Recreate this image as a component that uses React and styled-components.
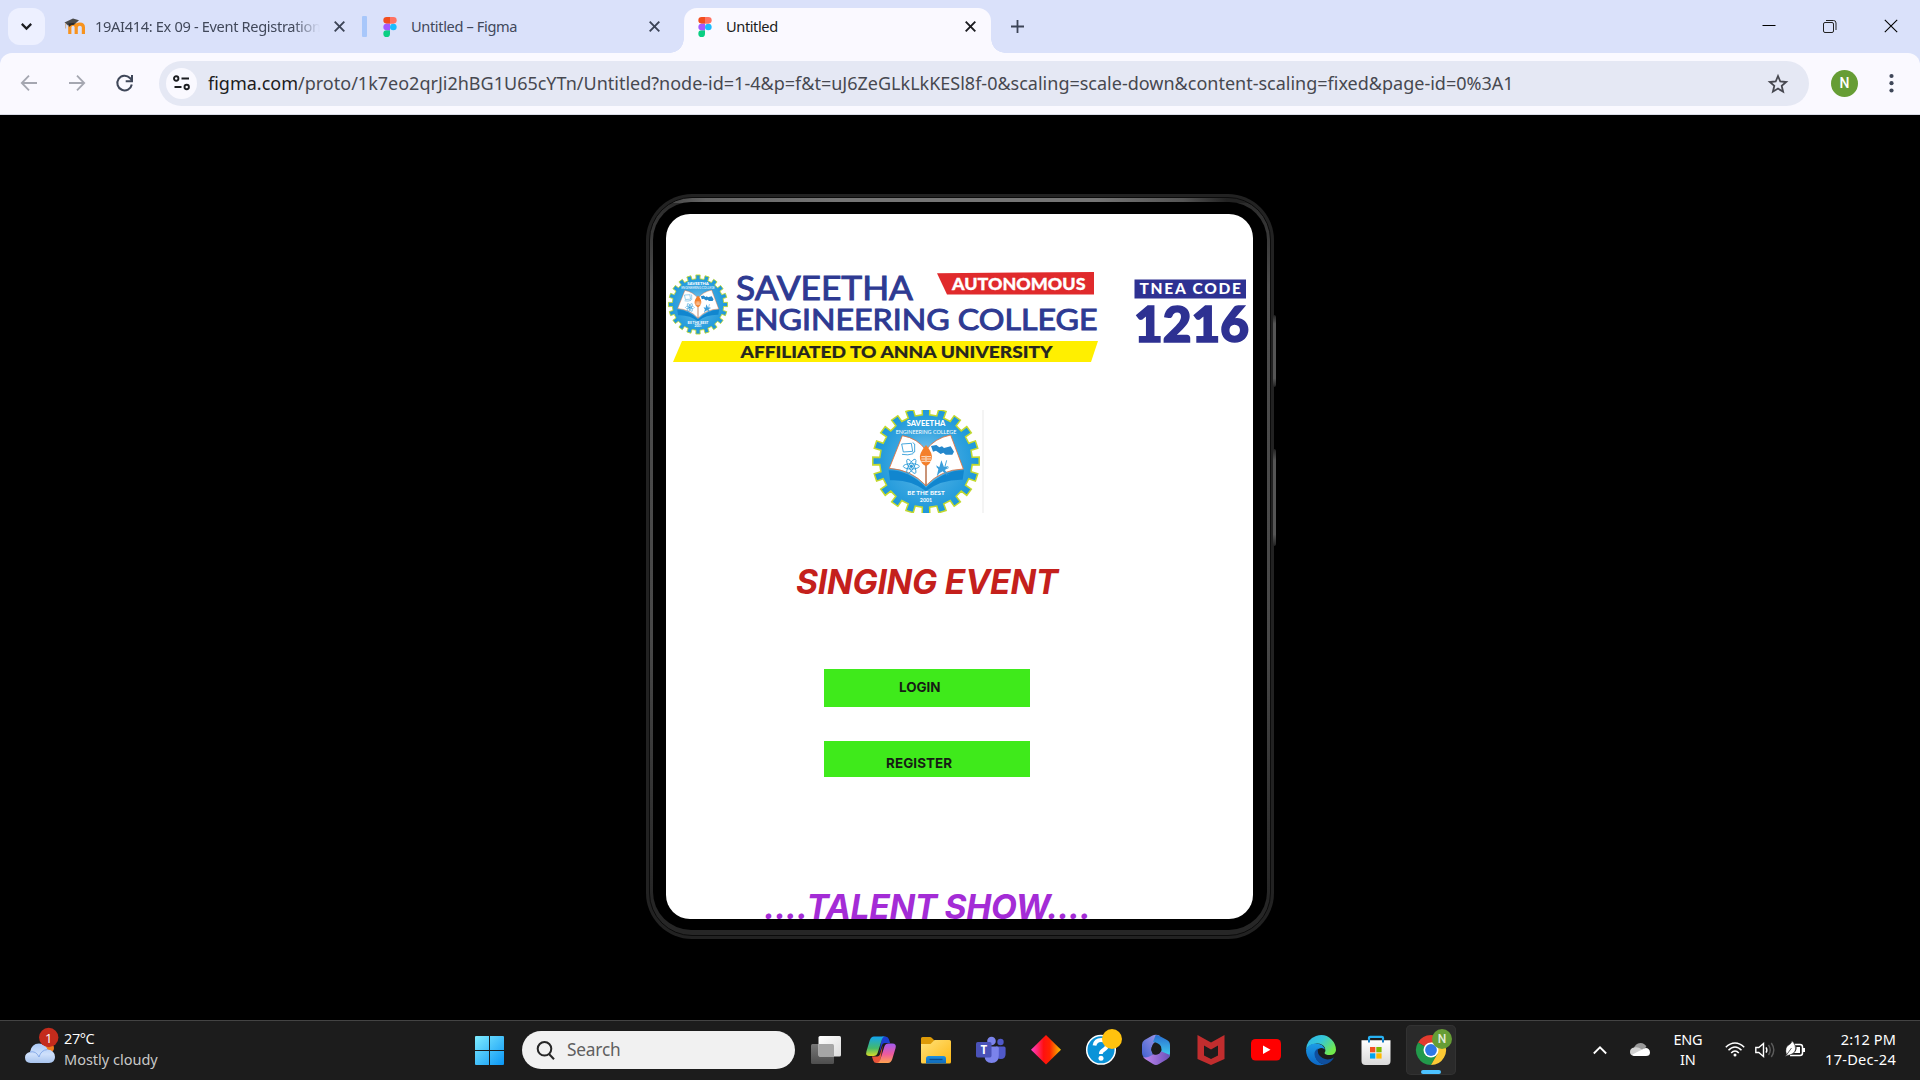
import React from "react";
import styled, { createGlobalStyle } from "styled-components";

const UI = `"Noto Sans", "Open Sans", sans-serif`;

const GlobalStyle = createGlobalStyle`
  * { box-sizing: border-box; }
  html, body { margin: 0; padding: 0; background: #000; overflow: hidden; }
  svg { display: block; overflow: visible; flex: none; }
`;

const Desktop = styled.div`
  width: 1920px;
  height: 1080px;
  display: flex;
  flex-direction: column;
  background: #000;
  font-family: ${UI};
`;

const Txt = styled.span`
  flex: none;
  font-size: ${(p) => p.$size}px;
  line-height: ${(p) => p.$line || 20}px;
  letter-spacing: ${(p) => p.$track || 0}px;
  color: ${(p) => p.$color};
  white-space: nowrap;
`;

/* ---------- browser chrome ---------- */

const TabStrip = styled.header`
  height: 53px;
  display: flex;
  background: #dae1fa;
  padding-left: 8px;
`;

const TabSearch = styled.button`
  width: 37px;
  height: 37px;
  margin: 8px 19px 0 0;
  border: 0;
  padding: 0;
  border-radius: 12px;
  background: #edf0ff;
  display: grid;
  place-items: center;
`;

const Tab = styled.div`
  width: ${(p) => p.$width}px;
  height: 37px;
  margin-top: 8px;
  display: flex;
  align-items: center;
  padding: 0 ${(p) => p.$right}px 0 ${(p) => p.$left}px;
`;

const ActiveTab = styled(Tab)`
  position: relative;
  height: 45px;
  padding-bottom: 8px;
  border-radius: 13px 13px 0 0;
  background: #faf9ff;
  &::before, &::after {
    content: "";
    position: absolute;
    bottom: 0;
    width: 14px;
    height: 14px;
  }
  &::before { left: -14px; background: radial-gradient(circle at 0 0, transparent 13.5px, #faf9ff 14px); }
  &::after { right: -14px; background: radial-gradient(circle at 100% 0, transparent 13.5px, #faf9ff 14px); }
`;

const TabTitle = styled.div`
  flex: 1;
  min-width: 0;
  margin-left: ${(p) => p.$gap}px;
  margin-right: 14px;
  padding-bottom: 2px;
  overflow: hidden;
  display: flex;
  ${(p) => p.$fade && `mask-image: linear-gradient(90deg, #000 88%, transparent 100%);`}
`;

const TabDivider = styled.div`
  width: 5px;
  height: 21px;
  margin-top: 16px;
  border-radius: 1px;
  background: #a8c7fa;
`;

const NewTab = styled.div`
  margin: 20px 0 0 20px;
`;

const WindowButtons = styled.div`
  margin-left: auto;
  display: flex;
  gap: 47px;
  padding: 19px 22px 0 0;
`;

const ToolbarBack = styled.div`
  background: #dae1fa;
  flex: none;
`;

const Toolbar = styled.nav`
  height: 62px;
  display: flex;
  align-items: center;
  padding: 0 22px 1px 18px;
  border-radius: 12px 12px 0 0;
  background: #faf9ff;
  border-bottom: 1px solid #d9dbe6;
`;

const NavIcons = styled.div`
  width: 141px;
  display: flex;
  gap: 26px;
`;

const Omnibox = styled.div`
  width: 1650px;
  height: 45px;
  border-radius: 23px;
  background: #e5e8f4;
  display: flex;
  align-items: center;
  padding: 0 21px 0 7px;
`;

const SiteInfo = styled.div`
  width: 31px;
  height: 31px;
  border-radius: 50%;
  background: #faf9ff;
  display: grid;
  place-items: center;
  margin-right: 11px;
`;

const Url = styled(Txt)`
  flex: 1;
  b { font-weight: 400; color: #1b1c20; }
`;

const Avatar = styled.div`
  width: 27px;
  height: 27px;
  margin: 0 31px 0 22px;
  border-radius: 50%;
  background: #669d35;
  color: #fff;
  font: 500 14px/27px Roboto, sans-serif;
  text-align: center;
`;

/* ---------- prototype stage ---------- */

const Stage = styled.main`
  flex: 1;
  display: flex;
  justify-content: center;
  align-items: flex-start;
  padding-top: 79px;
  background: #000;
`;

const Device = styled.div`
  position: relative;
  width: 628px;
  height: 745px;
  padding: 3px;
  border-radius: 46px;
  background: #222;
`;

const Band = styled.div`
  height: 100%;
  border-radius: 43px;
  border: 1px solid #0b0b0b;
  background: linear-gradient(90deg, #333 0, #666 9%, #757575 30%, #757575 72%, #555 86%, #222 93%) top / 100% 5px no-repeat,
    linear-gradient(180deg, #2a2a2a 0, #4c4c4c 12%, #484848 60%, #262626 95%);
  padding: 4px 3px 5px;
`;

const Bezel = styled.div`
  height: 100%;
  padding: 12px 13px 11px 13px;
  border-radius: 38px;
  background: #000;
`;

const Screen = styled.section`
  width: 587px;
  height: 705px;
  border-radius: 24px;
  overflow: hidden;
  background: #fff;
  display: flex;
  flex-direction: column;
  align-items: flex-start;
  & > * { flex: none; }
`;

const SideButton = styled.div`
  position: absolute;
  left: 627px;
  top: ${(p) => p.$top}px;
  width: 3px;
  height: ${(p) => p.$height}px;
  border-radius: 0 2px 2px 0;
  background: linear-gradient(180deg, #222, #555 12%, #555 88%, #222);
`;

const BannerBox = styled.div`
  margin-top: 56px;
  height: 94px;
`;

const CrestBox = styled.div`
  margin: 46px 0 0 206px;
  height: 103px;
`;

const Heading = styled.h1`
  margin: ${(p) => p.$top}px 0 0 ${(p) => p.$left}px;
  font: italic 700 33.6px/40px Inter, sans-serif;
  letter-spacing: ${(p) => p.$track}px;
  color: ${(p) => p.$color};
  white-space: nowrap;
`;

const ActionButton = styled.button`
  width: 206px;
  height: ${(p) => p.$height}px;
  margin: ${(p) => p.$top}px 0 0 158px;
  padding: ${(p) => p.$drop}px 0 0 ${(p) => p.$inset}px;
  border: 0;
  background: #3fea1b;
  color: #161c14;
  display: flex;
  font: 700 13.4px/16px Inter, sans-serif;
  letter-spacing: ${(p) => p.$track}px;
`;

/* ---------- taskbar ---------- */

const Taskbar = styled.footer`
  height: 60px;
  display: flex;
  background: #1c1c1c;
  border-top: 1px solid #434343;
`;

const Weather = styled.div`
  width: 475px;
  display: flex;
  padding: 8px 0 0 24px;
`;

const Stack = styled.div`
  display: flex;
  flex-direction: column;
  align-items: ${(p) => p.$align || "flex-start"};
  margin-left: ${(p) => p.$gap || 0}px;
  padding-top: ${(p) => p.$drop || 0}px;
`;

const StartIcon = styled.div`
  width: 47px;
  padding-top: 15px;
`;

const SearchBox = styled.div`
  width: 273px;
  height: 38px;
  margin-top: 10px;
  border-radius: 19px;
  background: #f1f1f1;
  display: flex;
  align-items: center;
  padding-left: 14px;
  gap: 12px;
`;

const Apps = styled.div`
  display: grid;
  grid-template-columns: repeat(12, 55px);
  align-content: start;
  margin: 4px 0 0 3.5px;
`;

const AppCell = styled.div`
  height: 50px;
  width: 50px;
  justify-self: center;
  display: grid;
  place-items: center;
  border-radius: 5px;
  position: relative;
  ${(p) => p.$active && `
    background: #2a2a2a;
    box-shadow: inset 0 0 0 1px #323232;
    &::after {
      content: "";
      position: absolute;
      left: 15px;
      bottom: 1px;
      width: 20px;
      height: 4px;
      border-radius: 2px;
      background: #4cc2ff;
    }
  `}
`;

const Tray = styled.div`
  margin-left: auto;
  display: flex;
  padding-right: 24px;
`;

const TrayIcon = styled.div`
  width: ${(p) => p.$width}px;
  margin-left: ${(p) => p.$gap || 0}px;
  padding-top: 18px;
`;

/* ---------- drawings ---------- */

const Cross = ({ color, size = 11, w = 1.9 }) => (
  <svg width={size} height={size} viewBox="0 0 11 11" stroke={color} strokeWidth={w}>
    <path d="M.7.7l9.6 9.6M10.3.7L.7 10.3" />
  </svg>
);

const FigmaIcon = () => (
  <svg width="14" height="20" viewBox="0 0 38 57">
    <path fill="#1abcfe" d="M19 28.5a9.5 9.5 0 1 1 19 0 9.5 9.5 0 0 1-19 0z" />
    <path fill="#0acf83" d="M0 47.5A9.5 9.5 0 0 1 9.5 38H19v9.5a9.5 9.5 0 1 1-19 0z" />
    <path fill="#ff7262" d="M19 0v19h9.5a9.5 9.5 0 1 0 0-19H19z" />
    <path fill="#f24e1e" d="M0 9.5A9.5 9.5 0 0 0 9.5 19H19V0H9.5A9.5 9.5 0 0 0 0 9.5z" />
    <path fill="#a259ff" d="M0 28.5A9.5 9.5 0 0 0 9.5 38H19V19H9.5A9.5 9.5 0 0 0 0 28.5z" />
  </svg>
);

const MoodleIcon = () => (
  <svg width="22" height="17" viewBox="0 0 22 17">
    <path d="M5.8 16V9.3q0-3.2 3.3-3.2 3.1 0 3.1 3.2V16M12.2 9.3q0-3.2 3.6-3.2 3.6 0 3.6 3.2V16" fill="none" stroke="#f7931e" strokeWidth="3.2" />
    <path d="M.5 4.6L9 .6l6 1.6-5 4.6-2-.6-4 1.2z" fill="#4a4a4a" />
    <path d="M1.6 5v5.5" stroke="#c9a98a" strokeWidth=".9" />
    <path d="M4.5 5.5l.4 3.4q2.4-2.4 5.2-2.2l.3-2z" fill="#2b2b2b" />
  </svg>
);

const gearPath = (cx, cy, outer, inner, teeth) => {
  const pts = [];
  const step = (Math.PI * 2) / teeth;
  for (let i = 0; i < teeth; i++) {
    const a = i * step;
    [[-0.25, inner], [-0.23, outer], [0.23, outer], [0.25, inner]].forEach(([k, r]) => {
      pts.push(`${(cx + r * Math.cos(a + k * step)).toFixed(1)} ${(cy + r * Math.sin(a + k * step)).toFixed(1)}`);
    });
  }
  return `M${pts.join("L")}Z`;
};

const Crest = () => (
  <g>
    <path d={gearPath(228, 198, 160, 139, 20)} fill="url(#crestFill)" stroke="#c2d82e" strokeWidth="4.5" />
    <path d="M116 226q62 0 112 52q52-52 114-52l-4 28q-62-2-110 34q-48-36-108-32z" fill="#1186cf" />
    <path d="M157 122q46 8 71 44q24-36 74-46l38 102q-68 2-112 50q-44-48-110-52z" fill="#fff" stroke="#e8703a" strokeWidth="2.5" />
    <path d="M228 200v72" stroke="#b9714a" strokeWidth="4.5" />
    <path d="M228 150q22 26 17 42q-4 16-17 21q-14-5-18-21q-4-16 18-42z" fill="#f47f2a" />
    <path d="M214 185h29M214 192h29M214 199h29" stroke="#fff" strokeWidth="2.4" />
    <path d="M228 182v20" stroke="#f7c8a0" strokeWidth="5" />
    <g fill="none" stroke="#2b9ad8" strokeWidth="2.6">
      <path d="M155 147l5 24 28-2-4-24zM188 143l6 4v24l-6 2M156 178q18 4 34-2" />
      <ellipse cx="184" cy="214" rx="24" ry="8" />
      <ellipse cx="184" cy="214" rx="24" ry="8" transform="rotate(60 184 214)" />
      <ellipse cx="184" cy="214" rx="24" ry="8" transform="rotate(120 184 214)" />
      <path d="M260 216l12 8M290 196l-6 22M296 218l-14 6 14 16" />
    </g>
    <path d="M243 153l16-3 9 7 8-3 6 5 20-5 10 16-5 9-20 0-7-6-8 4-14-10-9 3z" fill="#2488cc" />
    <path d="M274 196l8 20 14-3-12 12 8 18-14-14-10 6-8 10 5-22-7-12 10 6z" fill="#3a9edb" />
    <circle cx="184" cy="214" r="5" fill="#2b9ad8" />
    <g fill="#fff" fontFamily='Lato, sans-serif' fontWeight="700" textAnchor="middle">
      <text x="228" y="94" fontSize="20.5" fontWeight="900" textLength="116" lengthAdjust="spacingAndGlyphs">SAVEETHA</text>
      <text x="228" y="117" fontSize="17" fontWeight="400" textLength="182" lengthAdjust="spacingAndGlyphs">ENGINEERING COLLEGE</text>
      <text x="228" y="301" fontSize="18.5" textLength="112" lengthAdjust="spacingAndGlyphs">BE THE BEST</text>
      <text x="228" y="320" fontSize="18" textLength="37" lengthAdjust="spacingAndGlyphs">2001</text>
    </g>
  </g>
);

const Banner = () => (
  <svg width="587" height="94" viewBox="666 270 587 94" fontFamily="Lato, sans-serif">
    <defs>
      <radialGradient id="crestFill">
        <stop offset="0" stopColor="#8ccdf0" />
        <stop offset=".55" stopColor="#3aa6e0" />
        <stop offset="1" stopColor="#1c97da" />
      </radialGradient>
    </defs>
    <svg x="668" y="274.5" width="60" height="60" viewBox="66 36 324 324"><Crest /></svg>
    <g fill="#2e3a92" stroke="#2e3a92" strokeWidth="1">
      <text x="736" y="300.4" fontSize="33.5" textLength="177" lengthAdjust="spacingAndGlyphs">SAVEETHA</text>
      <text x="735.5" y="330" fontSize="29" textLength="362" lengthAdjust="spacingAndGlyphs">ENGINEERING COLLEGE</text>
    </g>
    <path d="M937 273.2L1094 272v22.6H947z" fill="#e02a2c" />
    <text x="952" y="289.6" fontSize="17" fontWeight="900" fill="#fff" stroke="#fff" strokeWidth=".3" textLength="133.5" lengthAdjust="spacingAndGlyphs">AUTONOMOUS</text>
    <path d="M682 341h416l-7 21H673z" fill="#ffef00" />
    <text x="740.5" y="357.6" fontSize="17" fontWeight="900" fill="#26261f" stroke="#26261f" strokeWidth=".2" textLength="312" lengthAdjust="spacingAndGlyphs">AFFILIATED TO ANNA UNIVERSITY</text>
    <path d="M1134.5 279.5h111.5v19h-111.5z" fill="#2e3192" />
    <text x="1139.5" y="294" fontSize="15.5" fontWeight="900" fill="#fff" textLength="101.5">TNEA CODE</text>
    <text x="1134" y="341.8" fontSize="50" fontWeight="900" fill="#2e3192" stroke="#2e3192" strokeWidth="1.7" textLength="115" lengthAdjust="spacingAndGlyphs">1216</text>
  </svg>
);

const CrestFrame = styled.svg`
  && { overflow: hidden; }
`;

const CrestPicture = () => (
  <CrestFrame width="112" height="103" viewBox="66 45 336 309">
    <rect x="396" y="45" width="6" height="309" fill="#f4f4f4" />
    <Crest />
  </CrestFrame>
);

const Ico = ({ children, box = 30 }) => (
  <svg width={box} height={box} viewBox={`0 0 ${box} ${box}`}>{children}</svg>
);

const Gradients = () => (
  <svg width="0" height="0">
    <defs>
      <linearGradient id="win" x1="0" y1="0" x2="1" y2="1"><stop stopColor="#7fecff" /><stop offset="1" stopColor="#0a96f5" /></linearGradient>
      <linearGradient id="cloud" x1="0" y1="0" x2="0" y2="1"><stop stopColor="#a9c8f6" /><stop offset=".55" stopColor="#cfe0fb" /><stop offset="1" stopColor="#a8c4ee" /></linearGradient>
      <linearGradient id="fold" x1="0" y1="0" x2="1" y2="1"><stop stopColor="#ffe27a" /><stop offset="1" stopColor="#fdb713" /></linearGradient>
      <linearGradient id="folt" x1="0" y1="0" x2="0" y2="1"><stop stopColor="#1e90e0" /><stop offset="1" stopColor="#0f68b8" /></linearGradient>
      <linearGradient id="dia"><stop stopColor="#ff3fd0" /><stop offset=".42" stopColor="#ff1010" /><stop offset=".62" stopColor="#ff2200" /><stop offset="1" stopColor="#f5c400" /></linearGradient>
      <linearGradient id="cpa" x1="0" y1="0" x2="0" y2="1"><stop stopColor="#12a5f0" /><stop offset=".6" stopColor="#45b96a" /><stop offset="1" stopColor="#d8dc28" /></linearGradient>
      <linearGradient id="cpb" x1="0" y1="0" x2="0" y2="1"><stop stopColor="#a25bf0" /><stop offset=".55" stopColor="#ee5a9c" /><stop offset="1" stopColor="#ffa44f" /></linearGradient>
      <linearGradient id="ma" x1="0" y1="1" x2="1" y2="0"><stop stopColor="#3a5ed0" /><stop offset="1" stopColor="#a79ae8" /></linearGradient>
      <linearGradient id="mb" x1="0" y1="0" x2="0" y2="1"><stop stopColor="#2a6fd0" /><stop offset="1" stopColor="#43d4f2" /></linearGradient>
      <linearGradient id="mc"><stop stopColor="#c58af0" /><stop offset="1" stopColor="#6a4fb8" /></linearGradient>
      <linearGradient id="ea" x1="0" y1="0" x2="1" y2=".6"><stop stopColor="#2cb4e8" /><stop offset=".5" stopColor="#35c7d8" /><stop offset="1" stopColor="#72ea4c" /></linearGradient>
      <linearGradient id="eb" x1="0" y1="0" x2="0" y2="1"><stop stopColor="#1c9ce6" /><stop offset="1" stopColor="#0c66c4" /></linearGradient>
      <linearGradient id="bag" x1="0" y1="0" x2="0" y2="1"><stop stopColor="#fff" /><stop offset="1" stopColor="#d9d9d9" /></linearGradient>
      <linearGradient id="tva" x1="0" y1="0" x2="1" y2="1"><stop stopColor="#fff" /><stop offset="1" stopColor="#dcdcdc" /></linearGradient>
      <linearGradient id="tvb" x1="0" y1="0" x2="0" y2="1"><stop stopColor="#777" /><stop offset="1" stopColor="#4e4e4e" /></linearGradient>
    </defs>
  </svg>
);

const TaskView = () => (
  <Ico>
    <rect x="0" y="9" width="23" height="20" rx="1.5" fill="url(#tvb)" />
    <rect x="7.5" y="1" width="22.5" height="20.5" rx="1.5" fill="url(#tva)" />
    <path d="M7.5 9H21.5a1.5 1.5 0 0 1 1.5 1.5v11H9a1.5 1.5 0 0 1-1.5-1.5z" fill="#a6a6a6" />
  </Ico>
);

const Copilot = () => (
  <Ico>
    <path d="M16 1.5h3.5q2.5 0 3.3 2.6l1.3 4H19q-2.4 0-3.3 3L13.2 19z" fill="#1b3fd0" />
    <path d="M14 28H10.5q-2.5 0-3.3-2.6l-1.3-4H11q2.4 0 3.3-3L16.8 10z" fill="#e8543a" />
    <path d="M8 1.5h11.5q-2.7 0-3.7 3.3L11.6 18q-1 3-4 3H3.7Q-.8 21 .4 16.4L3.7 5.5Q5 1.5 8 1.5z" fill="url(#cpa)" />
    <path d="M22 28H10.5q2.7 0 3.7-3.3L18.4 11.5q1-3 4-3h3.9q4.5 0 3.3 4.6L26.3 24Q25 28 22 28z" fill="url(#cpb)" />
  </Ico>
);

const Folder = () => (
  <Ico>
    <path d="M0 12V3.5Q0 2 1.5 2H9q1 0 1.7.7L13 5v7z" fill="#dd9a08" />
    <path d="M0 9h9.5L13.5 5H28.5Q30 5 30 6.5V27q0 1.5-1.5 1.5h-27Q0 28.5 0 27z" fill="url(#fold)" />
    <path d="M5 28.5V23.5Q5 21 7.5 21h15Q25 21 25 23.5v5z" fill="url(#folt)" />
    <path d="M8.5 24.5h13" stroke="#0a4d8f" strokeWidth="1.3" />
  </Ico>
);

const Teams = () => (
  <Ico>
    <circle cx="24.5" cy="7" r="3.2" fill="#5059c9" />
    <path d="M20 11.5h8q1.6 0 1.6 1.6v6q0 5-4.8 5-4.8 0-4.8-5z" fill="#5059c9" />
    <circle cx="15.5" cy="6" r="4.3" fill="#7b83eb" />
    <path d="M8.5 11.5H21q1.8 0 1.8 1.8V20q0 8-7.2 8-7.1 0-7.1-8z" fill="#7b83eb" />
    <rect x="0" y="7" width="15.5" height="15.5" rx="1.7" fill="#4a52b8" />
    <text x="7.75" y="19" fill="#fff" fontFamily="Open Sans, sans-serif" fontWeight="700" fontSize="11.5" textAnchor="middle">T</text>
  </Ico>
);

const Diamond = () => <Ico><path d="M15 0l15 14.7L15 29.5 0 14.7z" fill="url(#dia)" /></Ico>;

const Help = () => (
  <Ico>
    <circle cx="15" cy="14.8" r="14.3" fill="#0a93d8" stroke="#fff" strokeWidth="1.5" />
    <path d="M8.5 10.5q1-5.5 6.5-5.5 6 0 6 5 0 3-3.5 5-2.7 1.6-2.7 4" fill="none" stroke="#fff" strokeWidth="3.8" />
    <circle cx="15" cy="23.3" r="2.5" fill="#fff" />
    <circle cx="26" cy="4" r="10" fill="#ffc20e" />
  </Ico>
);

const M365 = () => (
  <Ico>
    <path d="M11 .8Q15-1.2 19 1l-5.5 6.5q-3 2-3 7.5l2 7-4 3.5L4 23q-3-2-3-5.5V9.5Q1 6.5 3.5 5z" fill="url(#ma)" />
    <path d="M14.5.2q2-.4 4.5 1L26 5q3 1.7 3 5v8q0 3-1.5 4.5L19.5 18q1.8-3.5.5-6.5-2-4-8-4.5z" fill="url(#mb)" />
    <path d="M2 21.5Q5 23.5 9.500 21l3-1.8q2.500 1.300 5.500-.5 1.500-1 2-2.500L29 20q0 2.500-3 4.200l-8 4.800q-3 2-6 0l-8-5Q2.500 22.800 2 21.500z" fill="url(#mc)" />
    <circle cx="15" cy="14.500" r="4.800" fill="#1c1c1c" />
  </Ico>
);

const McAfee = () => (
  <Ico>
    <path d="M1.5 0l13.500 7.5L28.500 0v24L15 30 1.500 24zM8 10.5v10L15 24l7-3.500v-10l-7 4z" fill="#c12d2e" fillRule="evenodd" />
  </Ico>
);

const YouTube = () => (
  <Ico>
    <rect x="0" y="4" width="30" height="21.5" rx="4.5" fill="#f00" />
    <path d="M12 10.5l7.5 4.3-7.5 4.3z" fill="#fff" />
  </Ico>
);

const Edge = () => (
  <Ico>
    <path d="M0 14.5Q1 4 10 1q9-3 15.5 3.5Q30 9 30 15q-.5 5-6 5-5 0-5.5-2 1.5-2.5.5-5Q17 8.5 11 8.5 4 8.5 0 14.5z" fill="url(#ea)" />
    <path d="M0 15Q2 8.5 9.5 8.5q8 0 9.5 6-5-3.5-8.5 1.2Q7.5 21 12 26q3 3.4 7 3.3Q11 32 5 26.5 0 21.5 0 15z" fill="url(#eb)" />
    <path d="M12 13.5Q7 16 9 22q3 7 10 7.500 6-1.500 9-7-6 3.500-11.500.5Q10.500 19.500 12 13.500z" fill="#0f4f9e" />
  </Ico>
);

const Store = () => (
  <Ico>
    <path d="M8 7V3Q8 1.8 9.2 1.8H20.8Q22 1.8 22 3V7" fill="none" stroke="#27b2f3" strokeWidth="2.2" />
    <path d="M.5 5.3h29V26q0 4-4 4h-21q-4 0-4-4z" fill="url(#bag)" />
    <path d="M7 4.500h2v3H7zM21 4.500h2v3h-2z" fill="#127cc4" />
    <path d="M9 12h5.3v5.3H9z" fill="#f25022" /><path d="M15.300 12h5.3v5.3h-5.3z" fill="#7fba00" />
    <path d="M9 18.300h5.3v5.3H9z" fill="#00a4ef" /><path d="M15.300 18.300h5.3v5.3h-5.3z" fill="#ffb900" />
  </Ico>
);

const Chrome = () => (
  <Ico>
    <path d="M15 15L2 7.5A15 15 0 0 1 28 7.5z" fill="#e33b2e" />
    <path d="M15 15L2 7.5A15 15 0 0 0 15 30l6.500-11.250z" fill="#229a4b" />
    <path d="M15 30A15 15 0 0 0 28 7.5H15v7.5l6.500 3.750z" fill="#fcc934" />
    <circle cx="15" cy="15" r="7.5" fill="#fff" />
    <circle cx="15" cy="15" r="5.9" fill="#2f78e6" />
    <circle cx="26" cy="4" r="10" fill="#669d35" />
    <text x="26" y="8.3" fill="#e3ecd9" fontFamily="Roboto, sans-serif" fontWeight="500" fontSize="12" textAnchor="middle">N</text>
  </Ico>
);

const WeatherIcon = () => (
  <svg width="32" height="36" viewBox="24 1029 32 36">
    <circle cx="49" cy="1048" r="5" fill="#f07a1e" />
    <path d="M30.5 1063Q25 1062.5 25 1057.500q0-4.500 5-5.500 1.500-8.500 9-8.500 6.500 0 8.500 6 7.500 1 7.500 7.500 0 5.500-6 6z" fill="url(#cloud)" />
    <path d="M30 1052q6-1.500 9 5M39 1057q2-7 8.500-7.500" stroke="#7fa5e6" fill="none" strokeWidth=".9" />
    <circle cx="48.7" cy="1037.5" r="9.7" fill="#c42b1c" />
    <text x="48.7" y="1042.5" fill="#fff" fontFamily="Open Sans, sans-serif" fontSize="13" textAnchor="middle">1</text>
  </svg>
);

const Temperature = styled(Txt)`
  font-family: "Open Sans", sans-serif;
`;

const APPS = [TaskView, Copilot, Folder, Teams, Diamond, Help, M365, McAfee, YouTube, Edge, Store, Chrome];

/* ---------- page ---------- */

const Browser = () => (
  <>
    <TabStrip>
      <TabSearch>
        <svg width="11" height="7" viewBox="0 0 11 7" fill="none" stroke="#1b1c20" strokeWidth="2.2"><path d="M.8.9l4.700 4.700L10.200.9" /></svg>
      </TabSearch>
      <Tab $width={298} $left={0} $right={17}>
        <MoodleIcon />
        <TabTitle $gap={9} $fade><Txt $size={14.6} $track={-0.33} $color="#41485a">19AI414: Ex 09 - Event Registration</Txt></TabTitle>
        <Cross color="#3c4456" />
      </Tab>
      <TabDivider />
      <Tab $width={317} $left={16} $right={24}>
        <FigmaIcon />
        <TabTitle $gap={14}><Txt $size={14.6} $track={-0.37} $color="#41485a">Untitled – Figma</Txt></TabTitle>
        <Cross color="#3c4456" />
      </Tab>
      <ActiveTab $width={307} $left={14} $right={15}>
        <FigmaIcon />
        <TabTitle $gap={14}><Txt $size={14.6} $track={-0.4} $color="#1b1c20">Untitled</Txt></TabTitle>
        <Cross color="#1b1c20" />
      </ActiveTab>
      <NewTab>
        <svg width="13" height="13" viewBox="0 0 13 13" stroke="#3c4456" strokeWidth="1.8"><path d="M6.500 0v13M0 6.500h13" /></svg>
      </NewTab>
      <WindowButtons>
        <svg width="14" height="14" viewBox="0 0 14 14"><path d="M.5 6.500h13" stroke="#000" /></svg>
        <svg width="14" height="14" viewBox="0 0 14 14" fill="none" stroke="#222"><rect x=".5" y="3.500" width="10" height="10" rx="1.500" /><path d="M3 1.500h7.500a2.500 2.500 0 0 1 2.500 2.500v7" /></svg>
        <svg width="14" height="14" viewBox="0 0 14 14" stroke="#000" strokeWidth="1.1"><path d="M.8.8l12.400 12.400M13.200.8L.8 13.200" /></svg>
      </WindowButtons>
    </TabStrip>
    <ToolbarBack>
      <Toolbar>
        <NavIcons>
          <svg width="22" height="22" viewBox="0 0 22 22" fill="none" stroke="#a5a7b1" strokeWidth="1.8"><path d="M19 11H4M11 3.700L3.800 11l7.200 7.300" /></svg>
          <svg width="22" height="22" viewBox="0 0 22 22" fill="none" stroke="#a5a7b1" strokeWidth="1.8"><path d="M3 11h15M11 3.700l7.200 7.300-7.200 7.300" /></svg>
          <svg width="22" height="22" viewBox="0 0 22 22" fill="none" stroke="#3f4759" strokeWidth="2"><path d="M17.800 12.500A7.300 7.300 0 1 1 15.900 6L17.900 8M18 3v6.300h-6.300" /></svg>
        </NavIcons>
        <Omnibox>
          <SiteInfo>
            <svg width="17" height="16" viewBox="0 0 17 16" fill="none" stroke="#1b1c20" strokeWidth="1.9"><circle cx="3.200" cy="3.500" r="2.200" /><path d="M8.500 3.500H16M1.500 12H8.500" /><circle cx="13.700" cy="12" r="2.200" /></svg>
          </SiteInfo>
          <Url $size={18} $line={24} $track={0} $color="#474850"><b>figma.com</b>/proto/1k7eo2qrJi2hBG1U65cYTn/Untitled?node-id=1-4&amp;p=f&amp;t=uJ6ZeGLkLkKESl8f-0&amp;scaling=scale-down&amp;content-scaling=fixed&amp;page-id=0%3A1</Url>
          <svg width="20" height="19" viewBox="0 0 20 19" fill="none" stroke="#474850" strokeWidth="1.8"><path d="M10 2l2.300 5.500 5.900.5-4.500 3.900 1.400 5.800L10 14.600l-5.100 3.100 1.400-5.800L1.800 8l5.900-.5z" /></svg>
        </Omnibox>
        <Avatar>N</Avatar>
        <svg width="5" height="20" viewBox="0 0 5 20" fill="#3f4759"><circle cx="2.500" cy="3" r="2.100" /><circle cx="2.500" cy="10.200" r="2.100" /><circle cx="2.500" cy="17.500" r="2.100" /></svg>
      </Toolbar>
    </ToolbarBack>
  </>
);

const Prototype = () => (
  <Stage>
    <Device>
      <SideButton $top={121} $height={72} />
      <SideButton $top={255} $height={97} />
      <Band>
        <Bezel>
          <Screen>
            <BannerBox><Banner /></BannerBox>
            <CrestBox><CrestPicture /></CrestBox>
            <Heading $top={49} $left={130} $track={-0.2} $color="#c4201c">SINGING EVENT</Heading>
            <ActionButton $top={67} $height={38} $drop={10} $inset={75} $track={0}>LOGIN</ActionButton>
            <ActionButton $top={34} $height={36} $drop={14} $inset={62} $track={0.1}>REGISTER</ActionButton>
            <Heading $top={110} $left={98} $track={-0.3} $color="#a42cd6">....TALENT SHOW....</Heading>
          </Screen>
        </Bezel>
      </Band>
    </Device>
  </Stage>
);

const Bar = () => (
  <Taskbar>
    <Weather>
      <WeatherIcon />
      <Stack $gap={8}>
        <Temperature $size={14.5} $track={-0.4} $color="#fff">27°C</Temperature>
        <Txt $size={14.5} $track={0} $color="#c8c8c8">Mostly cloudy</Txt>
      </Stack>
    </Weather>
    <StartIcon>
      <svg width="29" height="29" viewBox="0 0 29 29" fill="url(#win)"><path d="M0 1q0-1 1-1H14v14H0zM15 0H28q1 0 1 1V14H15zM0 15H14V29H1q-1 0-1-1zM15 15H29V28q0 1-1 1H15z" /></svg>
    </StartIcon>
    <SearchBox>
      <svg width="19" height="19" viewBox="0 0 19 19" fill="none" stroke="#262626" strokeWidth="2"><circle cx="8.500" cy="7.800" r="6.800" /><path d="M13 13l5 5.300" /></svg>
      <Txt $size={17.3} $line={24} $track={-0.2} $color="#5f5f5f">Search</Txt>
    </SearchBox>
    <Apps>
      {APPS.map((Icon, i) => <AppCell key={i} $active={Icon === Chrome}><Icon /></AppCell>)}
    </Apps>
    <Tray>
      <TrayIcon $width={37}>
        <svg width="14" height="22" viewBox="0 0 14 22" fill="none" stroke="#fff" strokeWidth="1.8"><path d="M.8 14.500L7 8.300l6.200 6.200" /></svg>
      </TrayIcon>
      <TrayIcon $width={44}>
        <svg width="20" height="22" viewBox="0 0 20 22"><path d="M3.500 10.500Q5 4 10.500 4q4 0 6 4l-6 4z" fill="#9a9a9a" /><path d="M4 8.500q4-1 8 2L4 17Q0 16.500 0 13q0-4 4-4.500z" fill="#d2d2d2" /><path d="M2 15.800l9.500-5Q16 7.500 18.500 10q1.500 1 1.500 3.500 0 3.500-4 3.500H4z" fill="#fff" /></svg>
      </TrayIcon>
      <Stack $align="center" $drop={8}>
        <Txt $size={14.5} $track={-0.4} $color="#fff">ENG</Txt>
        <Txt $size={14.5} $track={-0.2} $color="#fff">IN</Txt>
      </Stack>
      <TrayIcon $width={30} $gap={23}>
        <svg width="20" height="22" viewBox="0 0 20 22" fill="none" stroke="#fff" strokeWidth="1.5"><path d="M.8 8.300Q5 4 10 4t9.200 4.300M3.500 11.300Q6.500 8 10 8t6.500 3.300M6.200 14Q8 12 10 12t3.800 2" /><circle cx="10" cy="16" r="1.500" fill="#fff" stroke="none" /></svg>
      </TrayIcon>
      <TrayIcon $width={30}>
        <svg width="20" height="22" viewBox="0 0 20 22" fill="none" stroke="#fff" strokeWidth="1.4"><path d="M.8 8.500h3L8.500 4.500v13l-4.700-4h-3z" /><path d="M11 8.300q1.800 2.700 0 5.400" /><path d="M13.500 6q3.500 5 0 10M16.300 4q5 7 0 14" stroke="#5c5c5c" /></svg>
      </TrayIcon>
      <TrayIcon $width={40}>
        <svg width="21" height="22" viewBox="0 0 21 22"><path d="M10 5.500h5q2.500 0 2.500 2.500v6q0 2.500-2.500 2.500H5" fill="none" stroke="#fff" strokeWidth="1.5" /><path d="M18 9h2v4h-2z" fill="#fff" /><path d="M11.500 8h3.500v6H8.500q3.500-2 3-6z" fill="#fff" /><path d="M0 17.500L1.500 16Q-1 8 4.500 5.500 6.500 4.500 7 1.800q4 4 3.600 8.200-.6 5-8 6.500z" fill="#fff" stroke="#1c1c1c" strokeWidth=".5" /><path d="M1.500 16L6.500 9" stroke="#1c1c1c" strokeWidth=".7" /></svg>
      </TrayIcon>
      <Stack $align="flex-end" $drop={8}>
        <Txt $size={14.5} $track={0.1} $color="#fff">2:12 PM</Txt>
        <Txt $size={14.6} $track={0.25} $color="#fff">17-Dec-24</Txt>
      </Stack>
    </Tray>
  </Taskbar>
);

export default function App() {
  return (
    <Desktop>
      <GlobalStyle />
      <Browser />
      <Prototype />
      <Bar />
      <Gradients />
    </Desktop>
  );
}
